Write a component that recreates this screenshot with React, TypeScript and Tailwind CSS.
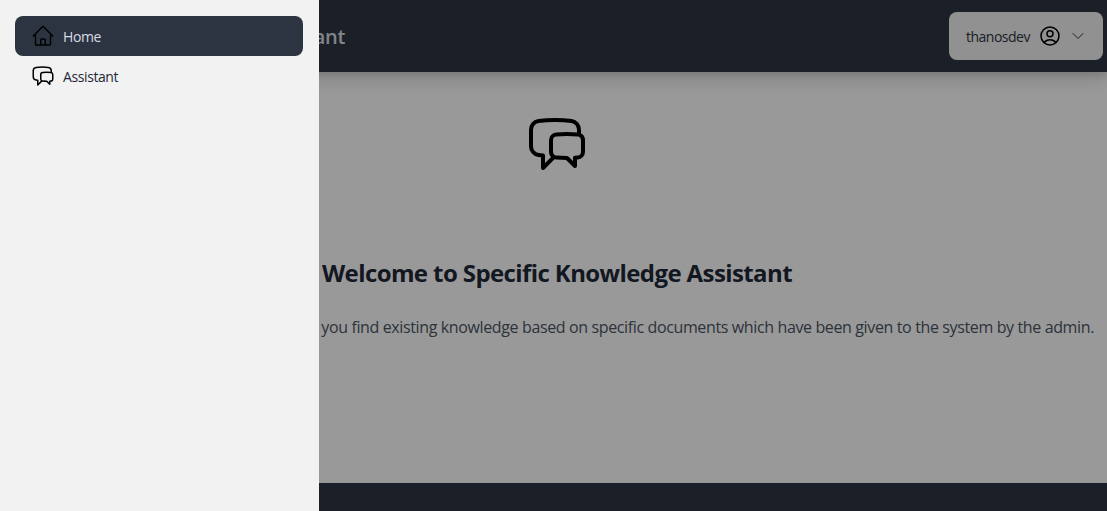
import {
  HiOutlineChatBubbleLeftRight,
  HiOutlineChevronDown,
  HiOutlineHome,
  HiOutlineUserCircle,
} from "react-icons/hi2";

function Header() {
  return (
    <header className="relative flex h-[72px] shrink-0 items-center justify-between bg-[#2d3441] pr-1 pl-16 shadow-[0_10px_15px_0_rgba(0,0,0,0.1),0_4px_6px_0_rgba(0,0,0,0.1)]">
      <div className="w-[281px] pt-0.5 text-right text-[20px] leading-7 font-semibold tracking-[-0.3px] whitespace-nowrap text-[#d7dde4]">
        Specific Knowledge Assistant
      </div>
      <button className="flex h-12 w-[154px] items-center rounded-lg bg-[#f2f2f2] pl-[17px] text-sm tracking-[-0.5px] text-[#2b3440]">
        <span className="w-[72px] pt-0.5 text-left">thanosdev</span>
        <HiOutlineUserCircle className="size-6 text-black" />
        <HiOutlineChevronDown className="ml-2 size-4 text-[#2b3440]" />
      </button>
    </header>
  );
}

function Welcome() {
  return (
    <main className="flex grow flex-col items-center bg-white pt-10 pl-[7px]">
      <HiOutlineChatBubbleLeftRight className="size-16 text-black" />
      <h1 className="mt-[81px] text-2xl font-bold tracking-[-0.6px] whitespace-nowrap text-[#1f2937]">
        Welcome to Specific Knowledge Assistant
      </h1>
      <p className="mt-[26px] self-end pr-[13px] text-base tracking-[-0.37px] whitespace-nowrap text-[#4b5563]">
        This assistant helps you find existing knowledge based on specific documents which have been given to the system by the admin.
      </p>
    </main>
  );
}

function Sidebar() {
  return (
    <nav className="flex w-[319px] shrink-0 flex-col bg-[#f2f2f2] pt-4 pr-4 pl-[15px] text-sm tracking-[-0.4px]">
      <a className="flex h-10 items-center gap-2 rounded-lg bg-[#2d3441] px-4 text-[#d7dde4]">
        <HiOutlineHome className="size-6 text-black" />
        <span className="pt-0.5">Home</span>
      </a>
      <a className="flex h-10 items-center gap-2 rounded-lg px-4 text-[#1f2937]">
        <HiOutlineChatBubbleLeftRight className="size-6 text-black" />
        <span className="pt-0.5">Assistant</span>
      </a>
    </nav>
  );
}

export default function App() {
  return (
    <div className="relative h-[511px] w-full overflow-hidden font-['Open_Sans','Noto_Sans',sans-serif]">
      <div className="flex h-full flex-col">
        <Header />
        <Welcome />
        <footer className="h-7 shrink-0 bg-[#2d3441]" />
      </div>
      <div className="absolute inset-0 flex bg-black/40">
        <Sidebar />
      </div>
    </div>
  );
}
